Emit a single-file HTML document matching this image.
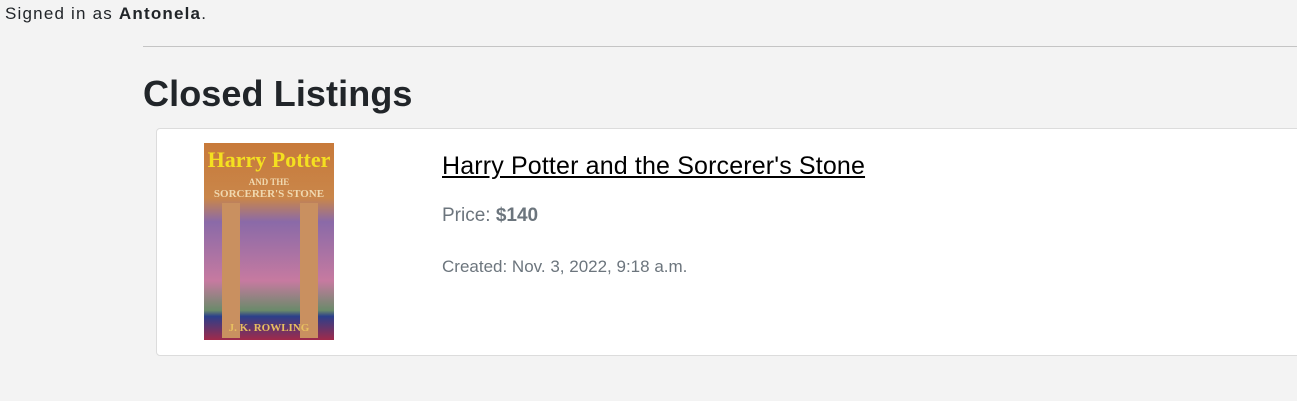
<!DOCTYPE html>
<html><head><style>
body{margin:0;width:1297px;height:401px;background:#f3f3f3;font-family:"Liberation Sans",sans-serif;color:#212529;overflow:hidden;position:relative}
.signed{position:absolute;left:5px;top:4px;font-size:17px;letter-spacing:1.2px}
hr{position:absolute;left:143px;top:46px;width:1160px;margin:0;border:0;border-top:1px solid #c4c4c4}
h1{position:absolute;left:143px;top:73px;margin:0;font-size:36px;font-weight:bold;letter-spacing:0.1px}
.card{position:absolute;left:156px;top:128px;width:1160px;height:226px;background:#fff;border:1px solid #dcdcdc;border-radius:4px}
.book{position:absolute;left:204px;top:143px;width:130px;height:197px;background:linear-gradient(#c87a3a 0,#c9864a 28%,#8a6aa8 40%,#c67aa0 70%,#6a8a6a 85%,#2b3f8a 88%,#a02a4a 100%);overflow:hidden}
.book .t{position:absolute;left:0;width:130px;text-align:center;color:#f4e020;font-family:"Liberation Serif",serif;font-weight:bold;white-space:nowrap}
.col{position:absolute;top:60px;width:18px;height:135px;background:#c99060}
.title{position:absolute;left:442px;top:152px;font-size:25px;letter-spacing:0.15px;color:#000;text-decoration:underline}
.price{position:absolute;left:442px;top:205px;font-size:19px;color:#6c757d}
.created{position:absolute;left:442px;top:257px;font-size:17px;color:#6c757d}
</style></head><body>
<div class="signed">Signed in as <b>Antonela</b>.</div>
<hr>
<h1>Closed Listings</h1>
<div class="card"></div>
<div class="book">
<div class="col" style="left:18px"></div><div class="col" style="left:96px"></div>
<div class="t" style="top:4px;font-size:22px">Harry Potter</div>
<div class="t" style="top:34px;font-size:9px;color:#f0d9b0">AND THE</div>
<div class="t" style="top:45px;font-size:11px;color:#f0d9b0">SORCERER'S STONE</div>
<div class="t" style="top:179px;font-size:11px;color:#e8c060">J. K. ROWLING</div>
</div>
<div class="title">Harry Potter and the Sorcerer's Stone</div>
<div class="price">Price: <b>$140</b></div>
<div class="created">Created: Nov. 3, 2022, 9:18 a.m.</div>
</body></html>
